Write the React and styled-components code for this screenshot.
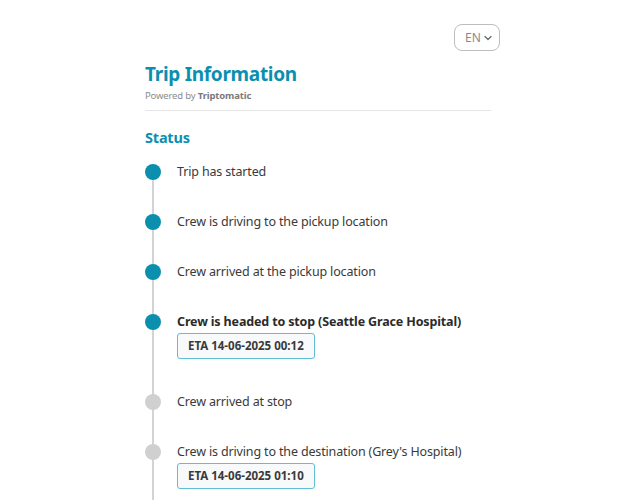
import React from "react";
import styled, { createGlobalStyle } from "styled-components";

const GlobalStyle = createGlobalStyle`
  body {
    margin: 0;
    background: #ffffff;
    font-family: "Noto Sans", "Open Sans", sans-serif;
    color: #333333;
  }
`;

const Page = styled.div`
  width: 355px;
  margin-left: 145px;
  padding-top: 24px;
`;

const Header = styled.div`
  display: flex;
  justify-content: flex-end;
`;

const LangSelect = styled.div`
  display: flex;
  align-items: center;
  justify-content: space-between;
  box-sizing: border-box;
  width: 46px;
  height: 27px;
  padding: 0 6px 0 10px;
  border: 1px solid #bdbdbd;
  border-radius: 8px;
  font-size: 12px;
  color: #8a8a8a;
`;

const Content = styled.div`
  width: 346px;
`;

const Title = styled.h1`
  margin: 10px 0 0;
  font-size: 19px;
  letter-spacing: -0.3px;
  line-height: 26px;
  font-weight: 700;
  color: #0b8fb0;
`;

const Powered = styled.div`
  margin-top: 2px;
  font-size: 9.5px;
  letter-spacing: -0.15px;
  line-height: 14px;
  color: #8c8c8c;

  b {
    color: #7a7a7a;
    font-weight: 700;
  }
`;

const Divider = styled.hr`
  margin: 7px 0 0;
  border: 0;
  border-top: 1px solid #e6e6e6;
`;

const SectionTitle = styled.h2`
  margin: 15px 0 0;
  font-size: 14.5px;
  letter-spacing: -0.2px;
  line-height: 22px;
  font-weight: 700;
  color: #0b8fb0;
`;

const Timeline = styled.ul`
  position: relative;
  list-style: none;
  margin: 14px 0 0;
  padding: 0;

  &::before {
    content: "";
    position: absolute;
    left: 7px;
    top: 10px;
    bottom: -60px;
    width: 2px;
    background: #d4d4d4;
  }
`;

const Item = styled.li`
  position: relative;
  display: flex;
  gap: 16px;
  padding-bottom: 30px;
`;

const Dot = styled.span`
  flex: none;
  width: 16px;
  height: 16px;
  margin-top: 2px;
  border-radius: 50%;
  background: ${(p) => (p.$done ? "#0a8fae" : "#d0d0d0")};
`;

const Body = styled.div`
  display: flex;
  flex-direction: column;
  align-items: flex-start;
`;

const Label = styled.div`
  font-size: 12.5px;
  letter-spacing: -0.15px;
  line-height: 20px;
  font-weight: ${(p) => (p.$current ? 700 : 400)};
  color: ${(p) => (p.$current ? "#2b2b2b" : "#3a3a3a")};
`;

const Eta = styled.div`
  margin-top: 1px;
  margin-bottom: 3px;
  padding: 3px 10px;
  border: 1px solid #5fbfd6;
  border-radius: 3px;
  background: #f7f9fa;
  font-size: 11.5px;
  line-height: 18px;
  font-weight: 700;
  color: #3a3a3a;
`;

const steps = [
  { label: "Trip has started", done: true },
  { label: "Crew is driving to the pickup location", done: true },
  { label: "Crew arrived at the pickup location", done: true },
  {
    label: "Crew is headed to stop (Seattle Grace Hospital)",
    done: true,
    current: true,
    eta: "14-06-2025 00:12",
  },
  { label: "Crew arrived at stop", done: false },
  {
    label: "Crew is driving to the destination (Grey's Hospital)",
    done: false,
    eta: "14-06-2025 01:10",
  },
];

const Chevron = () => (
  <svg width="10" height="10" viewBox="0 0 10 10" fill="none">
    <path d="M2 3.5l3 3 3-3" stroke="#6f6f6f" strokeWidth="1.4" strokeLinecap="round" strokeLinejoin="round" />
  </svg>
);

const App = () => {
  return (
    <>
      <GlobalStyle />
      <Page>
        <Header>
          <LangSelect>
            EN
            <Chevron />
          </LangSelect>
        </Header>
        <Content>
          <Title>Trip Information</Title>
          <Powered>
            Powered by <b>Triptomatic</b>
          </Powered>
          <Divider />
          <SectionTitle>Status</SectionTitle>
          <Timeline>
            {steps.map((s, i) => (
              <Item key={`step-${i}`}>
                <Dot $done={s.done} />
                <Body>
                  <Label $current={s.current}>{s.label}</Label>
                  {s.eta && <Eta>ETA {s.eta}</Eta>}
                </Body>
              </Item>
            ))}
          </Timeline>
        </Content>
      </Page>
    </>
  );
};

export default App;
